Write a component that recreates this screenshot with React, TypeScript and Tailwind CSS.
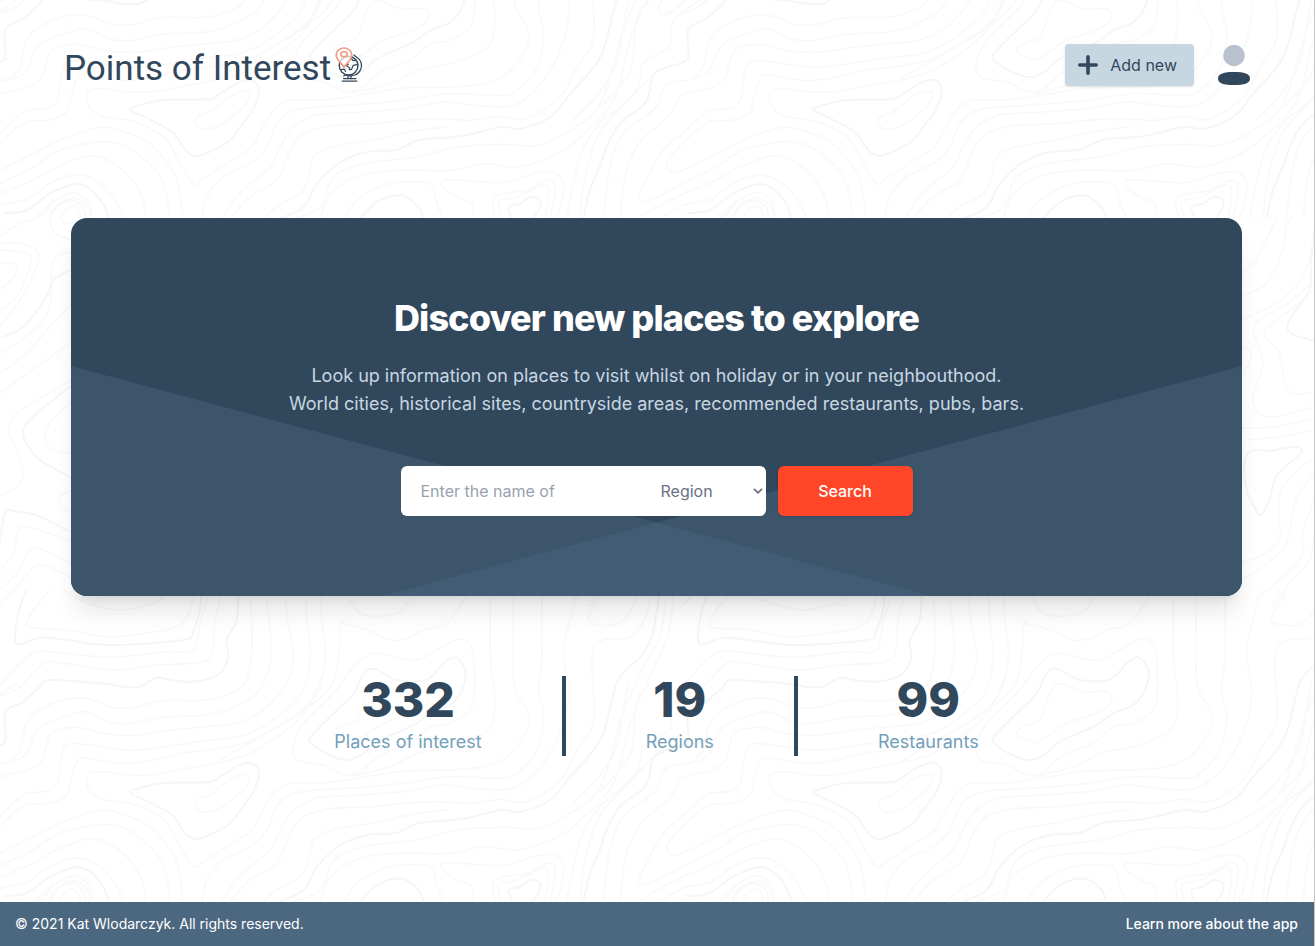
import React from "react";

type Pt = [number, number];
type Line = { p: Pt[]; bold?: boolean; closed?: boolean };
type Sheet = { dx: number; dy: number; lines: Line[] };

/* Turns a list of points into a smooth curve (Catmull-Rom to Bezier). */
function curve({ p, closed }: Line): string {
  const n = p.length;
  const at = (i: number): Pt =>
    closed ? p[(i + n) % n] : p[Math.max(0, Math.min(n - 1, i))];
  let d = `M${p[0][0]} ${p[0][1]}`;
  const last = closed ? n : n - 1;
  for (let i = 0; i < last; i++) {
    const [a, b, c, e] = [at(i - 1), at(i), at(i + 1), at(i + 2)];
    const x1 = b[0] + (c[0] - a[0]) / 6;
    const y1 = b[1] + (c[1] - a[1]) / 6;
    const x2 = c[0] - (e[0] - b[0]) / 6;
    const y2 = c[1] - (e[1] - b[1]) / 6;
    d += `C${x1.toFixed(1)} ${y1.toFixed(1)} ${x2.toFixed(1)} ${y2.toFixed(1)} ${c[0]} ${c[1]}`;
  }
  return closed ? d + "Z" : d;
}

/* Contour lines of one map tile, in thirds of a pixel. */
const sheets: Sheet[] = [
  {
    dx: -249,
    dy: 0,
    lines: [
      { bold: true, closed: true, p: [[640, 329], [660, 318], [740, 300], [870, 298], [900, 287], [960, 250], [1000, 240], [1025, 265], [1010, 325], [970, 380], [940, 420], [900, 445], [840, 468], [805, 450], [770, 400], [730, 375], [680, 350]] },
      { closed: true, p: [[835, 360], [850, 345], [880, 335], [930, 295], [970, 275], [998, 280], [985, 315], [950, 345], [910, 375], [860, 388], [838, 375]] },
      { p: [[1215, -20], [1170, 80], [1110, 140], [1050, 180], [990, 215], [900, 240], [800, 258], [700, 276], [620, 275], [560, 266], [520, 270], [508, 290], [520, 325], [560, 350], [640, 362], [700, 385], [750, 420], [790, 490], [830, 552], [860, 535], [930, 490], [1000, 445], [1030, 395], [1070, 330], [1115, 299]] },
      { p: [[1210, -279], [1215, -180], [1225, -80], [1200, 30], [1130, 100], [1040, 155], [980, 182], [900, 198], [800, 210], [680, 237], [600, 240], [540, 230], [500, 224], [480, 235], [462, 290], [450, 335], [400, 360], [330, 365], [280, 400], [220, 460], [200, 495], [220, 518], [260, 505], [350, 460], [450, 412], [550, 382], [620, 395], [690, 425], [740, 475], [780, 540], [798, 650]] },
      { p: [[1165, -279], [1170, -180], [1180, -80], [1155, 30], [1100, 85], [1040, 130], [960, 162], [850, 175], [720, 195], [640, 202], [560, 192], [480, 182], [445, 190], [430, 240], [422, 300], [390, 325], [325, 333], [270, 380], [190, 450], [150, 520], [115, 595], [150, 600], [250, 550], [350, 500], [430, 450], [550, 425], [620, 435], [680, 475], [730, 530], [752, 600], [755, 655]] },
      { p: [[1105, -279], [1110, -200], [1130, -80], [1110, 0], [1040, 80], [960, 120], [880, 130], [760, 142], [650, 157], [560, 152], [490, 134], [430, 138], [400, 155], [385, 200], [370, 240], [325, 265], [245, 285], [210, 345], [120, 425], [80, 510], [65, 600], [62, 655]] },
      { p: [[1045, -279], [1060, -150], [1060, -60], [1020, 30], [930, 80], [850, 98], [740, 102], [650, 120], [580, 118], [530, 95], [490, 87], [380, 125], [350, 160], [330, 210], [290, 235], [200, 255], [165, 325], [70, 400], [30, 500], [10, 655]] },
      { p: [[1000, -279], [1005, -100], [985, 0], [930, 35], [860, 52], [730, 53], [660, 72], [590, 75], [540, 55], [490, 44], [440, 50], [360, 85], [325, 130], [310, 200], [280, 235]] },
      { bold: true, p: [[965, -279], [959, -189], [929, -129], [934, -79], [909, -29], [849, -6], [779, -6], [719, -16], [669, 11], [619, 11], [549, 1], [399, -9], [369, 11], [319, 56], [265, 88], [265, 170], [240, 190], [165, 220], [145, 290], [125, 320], [60, 370], [20, 440], [0, 500], [-30, 570], [-50, 655]] },
      { p: [[300, 0], [230, 50], [212, 90], [208, 140], [130, 190], [115, 260], [60, 320], [0, 370], [-60, 470], [-100, 655]] },
      { p: [[195, -15], [175, 25], [190, 42], [220, 30], [249, 6]] },
      { p: [[150, 0], [110, 60], [95, 200], [50, 270], [0, 325]] },
      { p: [[85, 0], [70, 80], [50, 190], [0, 275], [-80, 360]] },
      { p: [[120, 650], [230, 590], [350, 540], [420, 500], [520, 467], [590, 490], [650, 545], [680, 610], [683, 655]] },
      { p: [[190, 650], [250, 615], [330, 598], [400, 550], [480, 524], [540, 545], [590, 595], [620, 655]] },
      { bold: true, p: [[260, 640], [330, 630], [400, 580], [480, 552], [530, 575], [560, 615], [575, 655]] },
      { p: [[360, 650], [410, 605], [470, 578], [515, 605], [525, 650]] },
      { p: [[400, 650], [430, 612], [470, 603], [500, 625], [505, 655]] },
      { closed: true, p: [[430, 655], [450, 625], [475, 620], [490, 655], [460, 670]] },
      { p: [[855, 655], [870, 590], [920, 530], [1000, 490], [1050, 440], [1080, 370], [1120, 335], [1190, 321]] },
      { p: [[915, 655], [950, 600], [1000, 550], [1060, 500], [1090, 440], [1130, 380], [1200, 343]] },
      { p: [[940, 655], [1000, 590], [1080, 540], [1120, 450], [1160, 400], [1240, 376]] },
      { p: [[1040, 655], [1080, 620], [1150, 580], [1175, 530], [1190, 470], [1250, 440], [1380, 418], [1480, 395], [1590, 380]] },
    ],
  },
  {
    dx: 651,
    dy: -279,
    lines: [
      { p: [[215, 578], [330, 578], [450, 560], [560, 543], [700, 540], [800, 530], [870, 500], [930, 420], [930, 360], [890, 270], [890, 0]] },
      { p: [[290, 600], [430, 592], [560, 580], [700, 560], [850, 565], [900, 550], [960, 480], [980, 380], [965, 300], [975, 200], [975, 0]] },
      { p: [[300, 622], [420, 615], [560, 605], [680, 585], [800, 598], [900, 590], [980, 520], [1040, 400], [1055, 300], [1040, 180], [1070, 50], [1090, 0]] },
      { p: [[340, 655], [470, 650], [560, 640], [660, 635], [760, 640], [850, 628], [930, 635], [1030, 570], [1080, 480], [1130, 390], [1125, 200], [1160, 150], [1243, 140], [1290, 70], [1300, 0]] },
      { p: [[820, 0], [820, 200], [832, 300], [830, 380], [800, 430], [700, 470], [600, 490], [520, 530], [400, 560]] },
      { bold: true, p: [[190, 935], [260, 900], [300, 830], [370, 765], [450, 735], [540, 728], [610, 698], [730, 688], [850, 660], [910, 665], [1000, 630], [1060, 560], [1150, 450], [1190, 310], [1209, 260], [1279, 190], [1309, 120], [1329, 0]] },
      { p: [[230, 935], [310, 900], [350, 810], [440, 770], [600, 750], [720, 720], [860, 712], [960, 715], [1060, 670], [1150, 590], [1219, 370], [1279, 230], [1329, 140], [1349, 0]] },
      { p: [[310, 935], [340, 860], [430, 805], [540, 790], [700, 790], [800, 770], [900, 780], [1000, 750], [1080, 700], [1190, 580], [1239, 400], [1289, 280], [1354, 130], [1369, 0]] },
      { p: [[380, 935], [420, 880], [500, 835], [560, 825], [640, 832], [660, 890], [680, 935]] },
      { bold: true, p: [[430, 935], [480, 885], [550, 865], [600, 895], [620, 935]] },
      { p: [[765, 935], [765, 890], [720, 870], [675, 835], [690, 818], [800, 825], [870, 825], [950, 800], [1010, 795], [1040, 830], [1030, 900], [1015, 935]] },
      { p: [[835, 935], [828, 880], [860, 860], [930, 850], [990, 820], [1015, 840], [1000, 935]] },
      { p: [[855, 935], [845, 885], [900, 870], [990, 835], [985, 935]] },
      { bold: true, p: [[885, 935], [875, 900], [910, 890], [940, 870], [970, 880], [965, 910], [945, 935]] },
      { p: [[1090, 935], [1100, 830], [1130, 720], [1160, 660], [1243, 570], [1330, 480]] },
      { p: [[1120, 100], [1115, 80], [1150, 20], [1160, 0]] },
      { p: [[1120, 100], [1180, 107], [1229, 80], [1269, 0]] },
      { p: [[0, 515], [130, 440], [250, 370], [340, 290], [365, 200], [370, 105], [385, 102], [450, 120], [520, 150], [570, 145], [620, 120], [690, 100], [740, 30], [760, 0]] },
      { p: [[390, 0], [400, 30], [430, 70], [490, 78], [550, 65], [590, 10]] },
      { bold: true, closed: true, p: [[280, 455], [290, 430], [360, 360], [410, 310], [440, 250], [475, 237], [540, 270], [630, 268], [680, 220], [715, 202], [745, 240], [735, 300], [700, 345], [640, 370], [590, 405], [480, 455], [440, 490], [390, 510], [330, 492]] },
      { closed: true, p: [[350, 430], [380, 405], [420, 390], [450, 310], [480, 280], [550, 305], [620, 305], [635, 330], [600, 365], [500, 400], [440, 440], [400, 458]] },
      { closed: true, p: [[230, 465], [260, 400], [350, 310], [420, 220], [480, 190], [590, 212], [660, 180], [720, 148], [760, 165], [772, 240], [765, 350], [700, 400], [640, 410], [580, 460], [490, 495], [430, 545], [380, 553], [320, 525], [240, 510]] },
    ],
  },
  {
    dx: 0,
    dy: -279,
    lines: [
      { bold: true, p: [[80, 0], [60, 50], [45, 130], [50, 162], [70, 160], [120, 143], [200, 150], [330, 165], [550, 150], [580, 120], [600, 60], [605, 0]] },
      { p: [[150, 0], [100, 60], [80, 105], [110, 115], [200, 120], [320, 140], [430, 130], [530, 110], [570, 60], [580, 0]] },
      { p: [[-50, 330], [0, 285], [60, 220], [110, 185], [200, 190], [330, 202], [500, 185], [580, 182], [600, 100], [630, 0]] },
      { p: [[0, 320], [60, 290], [130, 220], [180, 218], [340, 240], [470, 225], [610, 215], [640, 170], [645, 90], [670, 0]] },
      { p: [[190, 0], [240, 30], [300, 50], [370, 60], [470, 35], [510, 0]] },
    ],
  },
  {
    dx: 0,
    dy: 600,
    lines: [
      { p: [[0, 110], [50, 75], [130, 45], [160, 0]] },
      { p: [[150, 50], [160, 95], [213, 120]] },
      { p: [[150, 50], [170, 15], [230, -5], [270, 40], [250, 100]] },
      { p: [[0, 130], [60, 130], [110, 150], [110, 200], [60, 300], [0, 380]] },
      { p: [[0, 150], [80, 160], [90, 200], [50, 290], [0, 330]] },
      { p: [[0, 190], [40, 190], [50, 220], [0, 270]] },
      { bold: true, p: [[0, 415], [70, 380], [140, 290], [160, 240], [230, 200]] },
      { p: [[0, 460], [90, 400], [150, 320], [160, 180], [230, 155]] },
      { p: [[0, 520], [80, 460], [150, 380], [230, 300]] },
      { p: [[0, 580], [110, 500], [230, 415]] },
      { p: [[230, 530], [130, 590], [50, 640], [25, 690], [50, 750], [70, 820], [50, 860], [0, 885]] },
      { bold: true, p: [[230, 545], [110, 640], [70, 690], [80, 730], [120, 780], [230, 840]] },
      { p: [[230, 590], [150, 670], [135, 720], [160, 750], [230, 762]] },
      { p: [[230, 865], [180, 890], [190, 925], [230, 940]] },
      { bold: true, p: [[-10, 1060], [0, 1020], [15, 940], [40, 932], [120, 950], [230, 1005]] },
      { p: [[0, 1110], [40, 1060], [55, 990], [100, 985], [230, 1030]] },
      { p: [[0, 1170], [50, 1120], [95, 1045], [150, 1060], [230, 1100]] },
      { p: [[0, 1215], [60, 1150], [120, 1095], [230, 1140]] },
    ],
  },
  {
    dx: 1599,
    dy: 600,
    lines: [
      { bold: true, closed: true, p: [[85, 820], [90, 770], [115, 750], [160, 752], [240, 740], [257, 755], [220, 790], [180, 830], [160, 900], [135, 945], [115, 920], [95, 880]] },
      { p: [[60, 435], [100, 450], [100, 490], [60, 540]] },
      { p: [[60, 365], [180, 310], [260, 230], [290, 130], [300, 50]] },
      { p: [[60, 300], [150, 250], [200, 150], [210, 80], [230, 50]] },
      { p: [[60, 235], [120, 180], [170, 80], [180, 55]] },
      { p: [[294, 240], [230, 300], [130, 360], [115, 400], [140, 490], [110, 590], [130, 640], [180, 650], [240, 635], [300, 618]] },
      { p: [[294, 270], [250, 310], [170, 370], [145, 405], [190, 460], [210, 560], [240, 582], [300, 577]] },
      { bold: true, p: [[300, 60], [285, 180], [280, 270], [220, 360], [225, 400], [300, 424]] },
      { p: [[60, 685], [180, 680], [300, 653]] },
      { p: [[60, 722], [200, 710], [300, 687]] },
      { p: [[300, 765], [200, 860], [190, 950], [190, 1020], [130, 1070], [60, 1090]] },
      { p: [[300, 810], [240, 900], [200, 1050], [60, 1150]] },
      { p: [[300, 880], [260, 1000], [250, 1080], [120, 1200]] },
      { p: [[300, 960], [280, 1080], [220, 1150], [170, 1220]] },
    ],
  },
];

const TILE = 683;
const steps = [-1, 0, 1, 2];

function Contours() {
  return (
    <svg className="absolute inset-0 -z-10 h-full w-full" aria-hidden="true">
      <defs>
        <g id="contours" fill="none">
          {sheets.map((s, i) => (
            <g key={i} transform={`scale(0.33333) translate(${s.dx} ${s.dy})`}>
              {s.lines.map((l, j) => (
                <path key={j} d={curve(l)} stroke={l.bold ? "#f6f6f6" : "#f9f9f9"} strokeWidth={l.bold ? 6 : 5} />
              ))}
            </g>
          ))}
        </g>
      </defs>
      {steps.map((r) =>
        steps.map((c) => (
          <use key={`${r},${c}`} href="#contours" x={c * TILE} y={r * TILE} />
        )),
      )}
    </svg>
  );
}

function GlobeIcon() {
  return (
    <svg viewBox="0 0 28 36" className="h-9 w-7" fill="none" strokeLinecap="round" strokeLinejoin="round" aria-hidden="true">
      <g stroke="#31475c" strokeWidth="1.2">
        <circle cx="13.6" cy="18.6" r="9.4" strokeWidth="1.4" />
        <path d="M19 8L20.400 9.300C24.800 12 27.400 16.500 26 21.500C24.300 27 17.500 30.500 11 28L8.600 29" />
        <path d="M13.300 17.200L11.200 18.600L14.600 20.800L14.300 22.700L16.600 22.300L18.200 18.300L22 17.600" />
        <path d="M16 10.800L18 13.600L21 13.200M6 22.600L9.500 22.200L10.500 24.600" />
        <path d="M13 29V31.800M16 29V31.800M8.500 31.600H21M7.200 34.200H21.800" />
      </g>
      <path d="M9 20.200C6.500 16 1.200 12.500 1.200 8.200C1.200 4 4.700 1 9 1C13.300 1 16.800 4 16.800 8.200C16.800 12.500 11.500 16 9 20.200Z" stroke="#f0a088" strokeWidth="1.7" fill="#fff" fillOpacity="0.7" />
      <ellipse cx="9" cy="7.200" rx="3.200" ry="2.500" stroke="#f0a088" strokeWidth="1.700" />
    </svg>
  );
}

function Header() {
  return (
    <header className="flex h-[130px] items-center justify-between px-16">
      <a href="#home" className="flex items-center gap-1 text-[#31475c]">
        <span className="pt-2 font-['Roboto',sans-serif] text-[35px] leading-10">Points of Interest</span>
        <GlobeIcon />
      </a>
      <div className="flex items-center gap-6">
        <button type="button" className="flex h-[42px] items-center gap-3 rounded bg-[#c7d7e1] pr-[17px] pl-[13px] text-base text-[#31475c] shadow">
          <svg viewBox="0 0 20 20" className="size-5" stroke="currentColor" strokeWidth="3.6" strokeLinecap="round" aria-hidden="true">
            <path d="M10 1.800V18.200M1.800 10H18.200" />
          </svg>
          Add new
        </button>
        <button type="button" aria-label="Account">
          <svg viewBox="0 0 32 40" className="h-10 w-8" aria-hidden="true">
            <circle cx="16" cy="10.500" r="10.700" fill="#b7c2cd" />
            <path d="M0 33.500C0 28.500 6 27 16 27C26 27 32 28.500 32 33.500C32 38.500 26 40 16 40C6 40 0 38.500 0 33.500Z" fill="#31475c" />
          </svg>
        </button>
      </div>
    </header>
  );
}

function Hero() {
  return (
    <section className="relative isolate flex flex-col items-center overflow-hidden rounded-2xl bg-[#31475c] px-8 py-20 text-center">
      <svg viewBox="0 0 1171 378" preserveAspectRatio="none" className="absolute inset-0 -z-10 h-full w-full" aria-hidden="true">
        <path d="M0 148L860 378H0Z" fill="#3d556b" />
        <path d="M1171 148L311 378H1171Z" fill="#3d556b" />
        <path d="M585.500 304.500L860 378H311Z" fill="#415c74" />
      </svg>
      <h1 className="text-4xl leading-10 font-extrabold tracking-tight text-white">Discover new places to explore</h1>
      <p className="mt-6 text-lg leading-7 text-[#c7d7e1]">
        Look up information on places to visit whilst on holiday or in your neighbouthood.
        <br />
        World cities, historical sites, countryside areas, recommended restaurants, pubs, bars.
      </p>
      <form className="mt-12 flex w-full max-w-lg gap-3" onSubmit={(e) => e.preventDefault()}>
        <div className="flex h-[50px] min-w-0 flex-1 overflow-hidden rounded-md bg-white text-base">
          <input type="text" aria-label="Name of place" placeholder="Enter the name of" className="min-w-0 flex-1 px-5 text-gray-900 placeholder:text-gray-400 focus:outline-none" />
          <div className="relative flex w-[105px]">
            <select aria-label="Region" className="w-full appearance-none bg-transparent text-gray-500 focus:outline-none">
              <option>Region</option>
            </select>
            <svg viewBox="0 0 10 6" className="pointer-events-none absolute top-[22px] right-[3px] h-[6px] w-[10px]" fill="none" stroke="#6b7280" strokeWidth="1.800" aria-hidden="true">
              <path d="M1 0.800L5 4.800L9 0.800" />
            </svg>
          </div>
        </div>
        <button type="submit" className="h-[50px] w-[135px] rounded-md bg-[#ff4628] text-base font-medium text-white shadow">Search</button>
      </form>
    </section>
  );
}

const stats = [
  { value: "332", label: "Places of interest" },
  { value: "19", label: "Regions" },
  { value: "99", label: "Restaurants" },
];

export default function App() {
  return (
    <div className="mr-px border-r border-[#c8c8c8] bg-white font-['Inter',sans-serif]">
      <div className="relative isolate flex min-h-screen flex-col overflow-hidden">
        <Contours />
        <Header />
        <main className="flex-1 pt-[88px] pr-[72px] pl-[71px]">
          <div className="rounded-2xl shadow-xl">
            <Hero />
          </div>
          <dl className="mt-20 flex justify-center divide-x-4 divide-[#31475c]">
            {stats.map((s) => (
              <div key={s.label} className="flex flex-col-reverse gap-1 px-20 text-center">
                <dt className="text-lg leading-7 text-[#749fb9]">{s.label}</dt>
                <dd className="text-5xl leading-none font-extrabold text-[#31475c]">{s.value}</dd>
              </div>
            ))}
          </dl>
        </main>
        <footer className="flex h-11 items-center justify-between bg-[#4b6880] pr-4 pl-[15px] text-sm text-white">
          <p>© 2021 Kat Wlodarczyk. All rights reserved.</p>
          <a href="#about" className="font-medium">Learn more about the app</a>
        </footer>
      </div>
    </div>
  );
}
